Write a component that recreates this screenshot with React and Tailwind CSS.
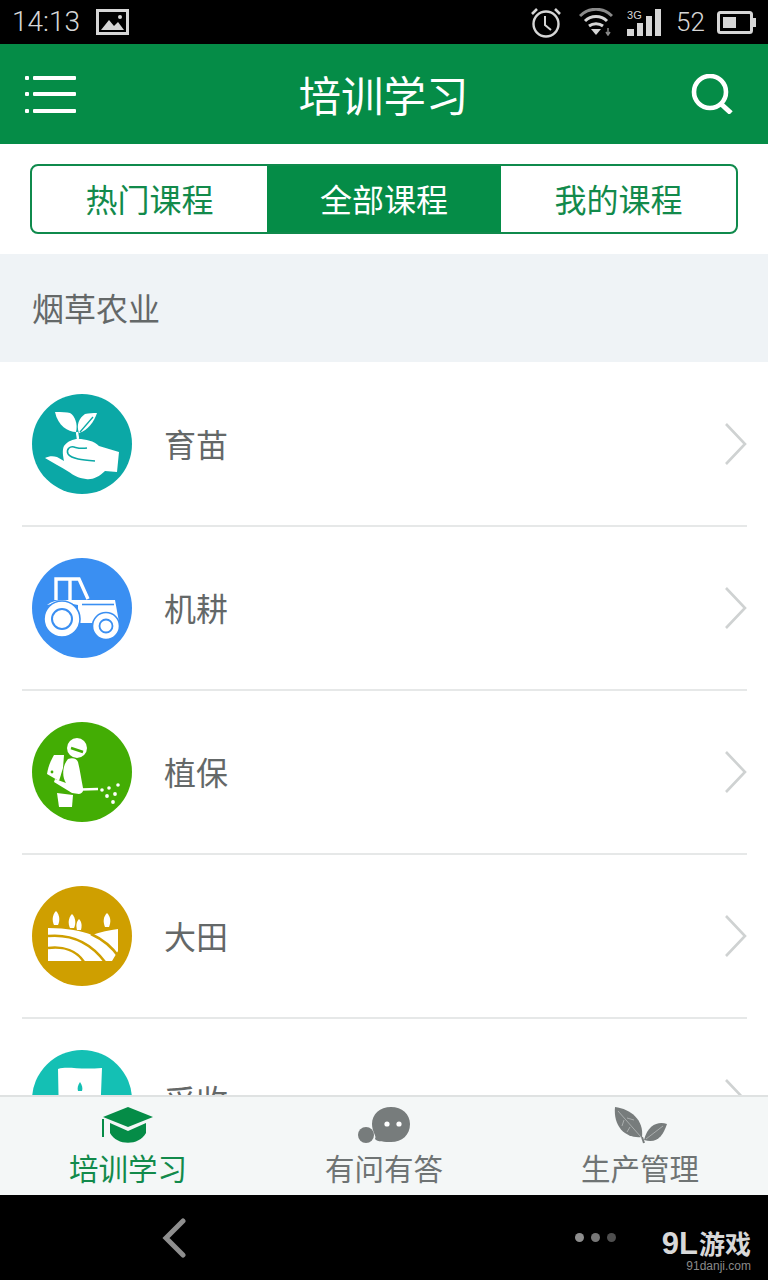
import React from 'react';

const CourseIcon = ({ color, children }) => (
  <svg width="100" height="100" viewBox="0 0 100 100" className="shrink-0">
    <circle cx="50" cy="50" r="50" fill={color} />
    {children}
  </svg>
);

const SeedIcon = () => (
  <CourseIcon color="#0ba8a6">
    <path d="M23 18 C30 18 35 18 38 19 C43 22 46 30 44 38 C36 38 26 32 23 18Z" fill="#fff" />
    <path d="M65 19 C62 28 56 36 47 39 C44 31 47 24 53 20 C57 19 61 19 65 19Z" fill="#fff" />
    <path d="M61 23 L48 38" stroke="#0ba8a6" strokeWidth="1.3" />
    <path d="M45 38 L46 45" stroke="#fff" strokeWidth="2.4" />
    <path d="M32 52 C36 47 41 45 46 45 C54 45 62 47 67 52 L87 58 L85 78 L73 77 C67 83 60 86 54 85 C46 84 41 81 37 78 C29 73 20 68 13 64 C17 62 21 62 25 63 L32 67 C31 62 30 56 32 52Z" fill="#fff" />
    <path d="M36 60 C34 55 38 52 42 53 C46 54 48 55 55 54 M36 60 C40 65 50 66 63 67" stroke="#0ba8a6" strokeWidth="1.6" fill="none" />
  </CourseIcon>
);

const TractorIcon = () => (
  <CourseIcon color="#3a8ff2">
    <path d="M24 42 V21 H47 L56 41 M38 21 V42" stroke="#fff" strokeWidth="3.4" fill="none" />
    <path d="M15 47 C20 43 26 42 32 42 H83 L87 64 L63 65 L46 65 V47 L30 44Z" fill="#fff" />
    <path d="M50 46.5 H82" stroke="#3a8ff2" strokeWidth="1.6" />
    <circle cx="30" cy="61" r="18" fill="#fff" stroke="#3a8ff2" strokeWidth="1.6" />
    <circle cx="30" cy="61" r="10" fill="#fff" stroke="#3a8ff2" strokeWidth="2" />
    <circle cx="74" cy="68" r="13.5" fill="#fff" stroke="#3a8ff2" strokeWidth="1.6" />
    <circle cx="74" cy="68" r="6.5" fill="#fff" stroke="#3a8ff2" strokeWidth="1.8" />
  </CourseIcon>
);

const SprayIcon = () => (
  <CourseIcon color="#43ad04">
    <circle cx="45" cy="26" r="10" fill="#fff" />
    <path d="M39 26 L51 30" stroke="#43ad04" strokeWidth="2.6" />
    <path d="M22 33 L32 33 L31 46 L27 59 L15 52 C16 45 19 38 22 33Z" fill="#fff" />
    <circle cx="20" cy="50" r="1.4" fill="#43ad04" />
    <path d="M36 37 C41 35 45 37 46 40 C48 48 49 56 51 66 C52 69 50 72 47 72 L40 71 L22 60 L23 57 L34 61 C30 55 30 44 36 37Z" fill="#fff" />
    <path d="M25 71 L41 73 L40 85 H27Z" fill="#fff" />
    <path d="M49 67.5 L66 67" stroke="#fff" strokeWidth="2.4" />
    <g fill="#fff">
      <circle cx="70" cy="68" r="1.8" />
      <circle cx="77" cy="66" r="1.8" />
      <circle cx="86" cy="63" r="1.8" />
      <circle cx="83" cy="72" r="1.9" />
      <circle cx="75" cy="74" r="1.9" />
      <circle cx="81" cy="80" r="1.9" />
    </g>
  </CourseIcon>
);

const FieldIcon = () => (
  <CourseIcon color="#cf9f00">
    <path d="M16 42 C35 42 50 45 60 49 C68 46 78 44 86 43 V65 L80 75 H16Z" fill="#fff" />
    <path d="M16 50 C38 48 58 56 73 76 M16 62 C32 60 45 65 52 76 M59 48 C70 53 80 61 87 71" stroke="#cf9f00" strokeWidth="2.6" fill="none" />
    <g fill="#fff">
      <path d="M24 25 C28 29 28 35 26 39 H22 C20 35 20 29 24 25Z" />
      <path d="M40 28 C44 32 44 38 42 42 H38 C36 38 36 32 40 28Z" />
      <path d="M47 33 C50 36 50 40 49 44 H45 C44 40 44 36 47 33Z" />
      <path d="M75 27 C79 31 79 36 77 41 H73 C71 36 71 31 75 27Z" />
    </g>
  </CourseIcon>
);

const HarvestIcon = () => (
  <CourseIcon color="#14c0b4">
    <path d="M26 19 C36 16 46 20 70 18 L68 70 H27Z" fill="#fff" />
    <path d="M48 32 C50 35 51 38 50 41 H46 C45 38 46 35 48 32Z" fill="#14c0b4" />
  </CourseIcon>
);

const courses = [
  { name: '育苗', Icon: SeedIcon },
  { name: '机耕', Icon: TractorIcon },
  { name: '植保', Icon: SprayIcon },
  { name: '大田', Icon: FieldIcon },
  { name: '采收', Icon: HarvestIcon },
];

const StatusBar = () => (
  <div className="h-[44px] bg-black flex items-center pl-[12px] text-[#d6d6d6]">
    <span className="text-[28px] font-light leading-none font-['Roboto',sans-serif]">14:13</span>
    <svg width="33" height="26" viewBox="0 0 33 26" className="ml-[16px]">
      <rect x="1.5" y="1.5" width="30" height="23" fill="none" stroke="#d6d6d6" strokeWidth="3" />
      <path d="M5 21 L13 11 L18 17 L22 13 L28 21Z" fill="#d6d6d6" />
      <circle cx="24" cy="8" r="2" fill="#d6d6d6" />
    </svg>
    <svg width="32" height="31" viewBox="0 0 32 31" className="ml-[401px]">
      <circle cx="16" cy="17" r="12.5" fill="none" stroke="#d6d6d6" strokeWidth="2.4" />
      <path d="M15 9 V18 L21 23" fill="none" stroke="#d6d6d6" strokeWidth="2" />
      <path d="M2 7 L7 2 M30 7 L25 2" stroke="#d6d6d6" strokeWidth="2.6" />
    </svg>
    <svg width="34" height="28" viewBox="0 0 34 28" className="ml-[17px]">
      <path d="M1 8 C10 -1 24 -1 33 8" fill="none" stroke="#8a8a8a" strokeWidth="3" />
      <path d="M6 13 C12 7 22 7 28 13" fill="none" stroke="#d6d6d6" strokeWidth="3" />
      <path d="M10 18 C14 15 20 15 24 18" fill="none" stroke="#d6d6d6" strokeWidth="3" />
      <path d="M12 21 H22 L17 27Z" fill="#d6d6d6" />
      <path d="M29 20 V26 M27 24 L29 27 L31 24" fill="none" stroke="#8a8a8a" strokeWidth="1.5" />
    </svg>
    <div className="relative ml-[14px] w-[36px] h-[27px]">
      <span className="absolute left-0 top-[1px] text-[11px] leading-none font-['Liberation_Sans',sans-serif]">3G</span>
      <div className="absolute inset-0 flex items-end gap-[3px]">
        <div className="w-[7px] h-[7px] bg-[#d6d6d6]" />
        <div className="w-[6px] h-[13px] bg-[#d6d6d6]" />
        <div className="w-[6px] h-[20px] bg-[#d6d6d6]" />
        <div className="w-[6px] h-[27px] bg-[#d6d6d6]" />
      </div>
    </div>
    <span className="ml-[13px] text-[26px] font-light leading-none font-['Roboto',sans-serif]">52</span>
    <svg width="40" height="23" viewBox="0 0 40 23" className="ml-[12px]">
      <rect x="1.5" y="1.5" width="33" height="20" rx="2" fill="none" stroke="#d6d6d6" strokeWidth="3" />
      <rect x="6" y="6" width="13" height="11" fill="#d6d6d6" />
      <rect x="36" y="7" width="3" height="9" fill="#d6d6d6" />
    </svg>
  </div>
);

const Header = () => (
  <div className="h-[100px] bg-[#058c47] flex items-center justify-between pl-[25px] pr-[35px]">
    <svg width="51" height="42" viewBox="0 0 51 42">
      <g fill="#fff">
        <rect x="0" y="3" width="4" height="4" rx="1" />
        <rect x="8" y="3" width="43" height="4" rx="1" />
        <rect x="0" y="19" width="4" height="4" rx="1" />
        <rect x="8" y="19" width="43" height="4" rx="1" />
        <rect x="0" y="36" width="4" height="4" rx="1" />
        <rect x="8" y="36" width="43" height="4" rx="1" />
      </g>
    </svg>
    <span className="text-[42.5px] text-white leading-none">培训学习</span>
    <svg width="42" height="40" viewBox="0 0 42 40" fill="none" stroke="#fff">
      <circle cx="19" cy="18" r="16" strokeWidth="4.6" />
      <path d="M29 29 L40 39" strokeWidth="5" />
    </svg>
  </div>
);

const Tabs = () => (
  <div className="h-[110px] bg-white flex items-center justify-center">
    <div className="w-[708px] h-[70px] border-2 border-[#0f8a4c] rounded-[8px] flex overflow-hidden text-[32px] text-[#128a4b]">
      <div className="w-[235px] pb-[2px] flex items-center justify-center">热门课程</div>
      <div className="w-[234px] pb-[2px] flex items-center justify-center bg-[#058c47] text-white">全部课程</div>
      <div className="flex-1 pb-[2px] flex items-center justify-center">我的课程</div>
    </div>
  </div>
);

const CourseRow = ({ name, Icon }) => (
  <div className="h-[164px] shrink-0 ml-[22px] mr-[21px] pl-[10px] border-b-2 border-[#e6e8e8] flex items-center">
    <Icon />
    <span className="ml-[32px] pb-[2px] text-[32px] text-[#646868]">{name}</span>
    <svg width="24" height="42" viewBox="0 0 24 42" className="ml-auto" fill="none" stroke="#cfd2d2" strokeWidth="2.6">
      <path d="M3 1 L22 21 L3 41" />
    </svg>
  </div>
);

const BottomTab = ({ label, active, children }) => (
  <div className="flex-1 flex flex-col items-center">
    <div className="h-[44px] flex items-center">{children}</div>
    <span className={active ? 'text-[29.5px] leading-[40px] text-[#128a4b]' : 'text-[29.5px] leading-[40px] text-[#6f7474]'}>
      {label}
    </span>
  </div>
);

const BottomBar = () => (
  <div className="h-[100px] shrink-0 bg-[#f4f7f7] border-t-2 border-[#dfe2e2] flex pt-[6px]">
    <BottomTab label="培训学习" active>
      <svg width="54" height="40" viewBox="0 0 54 40">
        <path d="M2 12 L27 2 L52 12 L27 22Z" fill="#058c47" />
        <path d="M9 18 L27 26 L45 18 V28 C38 41 16 41 9 28Z" fill="#058c47" />
        <path d="M2 14 V32" stroke="#058c47" strokeWidth="2" />
      </svg>
    </BottomTab>
    <BottomTab label="有问有答">
      <svg width="54" height="38" viewBox="0 0 54 38">
        <circle cx="9" cy="29" r="8" fill="#777c7c" />
        <path d="M34 1 C45 1 53 8 53 18 C53 29 45 36 34 36 C28 36 20 36 18 33 C20 30 15 26 15 18 C15 8 23 1 34 1Z" fill="#777c7c" />
        <circle cx="30" cy="18" r="2.6" fill="#fff" />
        <circle cx="42" cy="18" r="2.6" fill="#fff" />
      </svg>
    </BottomTab>
    <BottomTab label="生产管理">
      <svg width="54" height="38" viewBox="0 0 54 38">
        <path d="M2 1 C18 3 31 14 29 31 C14 33 0 22 2 1Z" fill="#777c7c" />
        <path d="M54 18 C46 15 35 18 31 34 C44 38 50 30 54 18Z" fill="#777c7c" />
        <path d="M5 5 L28 31 M11 14 L9 20 M17 21 L14 26 M14 12 L21 14" stroke="#a9adad" strokeWidth="1" fill="none" />
        <path d="M29 31 L31 37" stroke="#777c7c" strokeWidth="2" />
        <path d="M50 20 L33 33" stroke="#a9adad" strokeWidth="1" />
      </svg>
    </BottomTab>
  </div>
);

const NavBar = () => (
  <div className="h-[85px] shrink-0 bg-black flex items-center pl-[162px]">
    <svg width="24" height="40" viewBox="0 0 24 40" fill="none" stroke="#8e8e8e" strokeWidth="5" strokeLinecap="round">
      <path d="M21 3 L4 20 L21 37" />
    </svg>
    <div className="ml-[389px] flex gap-[7px]">
      <div className="w-[9px] h-[9px] rounded-full bg-[#8e8e8e]" />
      <div className="w-[9px] h-[9px] rounded-full bg-[#777]" />
      <div className="w-[9px] h-[9px] rounded-full bg-[#4f4f4f]" />
    </div>
    <div className="ml-[47px] w-[88px] flex flex-col items-end mt-[28px]">
      <div className="text-[#d8d8d8] font-bold text-[26px] leading-[28px] whitespace-nowrap">
        <span className="font-['Liberation_Sans',sans-serif] text-[31px] mr-[1px]">9L</span>游戏
      </div>
      <span className="text-[12px] leading-[16px] text-[#8a8a8a] font-['Liberation_Sans',sans-serif]">91danji.com</span>
    </div>
  </div>
);

const App = () => (
  <div className="w-[768px] h-[1280px] flex flex-col overflow-hidden bg-white font-['Noto_Sans_CJK_SC','Noto_Sans',sans-serif]">
    <StatusBar />
    <Header />
    <Tabs />
    <div className="h-[108px] shrink-0 bg-[#eff3f6] flex items-center pl-[32px] pb-[2px] text-[32px] text-[#646868]">烟草农业</div>
    <div className="flex-1 overflow-hidden flex flex-col pt-[1px]">
      {courses.map((c) => (
        <CourseRow key={c.name} name={c.name} Icon={c.Icon} />
      ))}
    </div>
    <BottomBar />
    <NavBar />
  </div>
);

export default App;
